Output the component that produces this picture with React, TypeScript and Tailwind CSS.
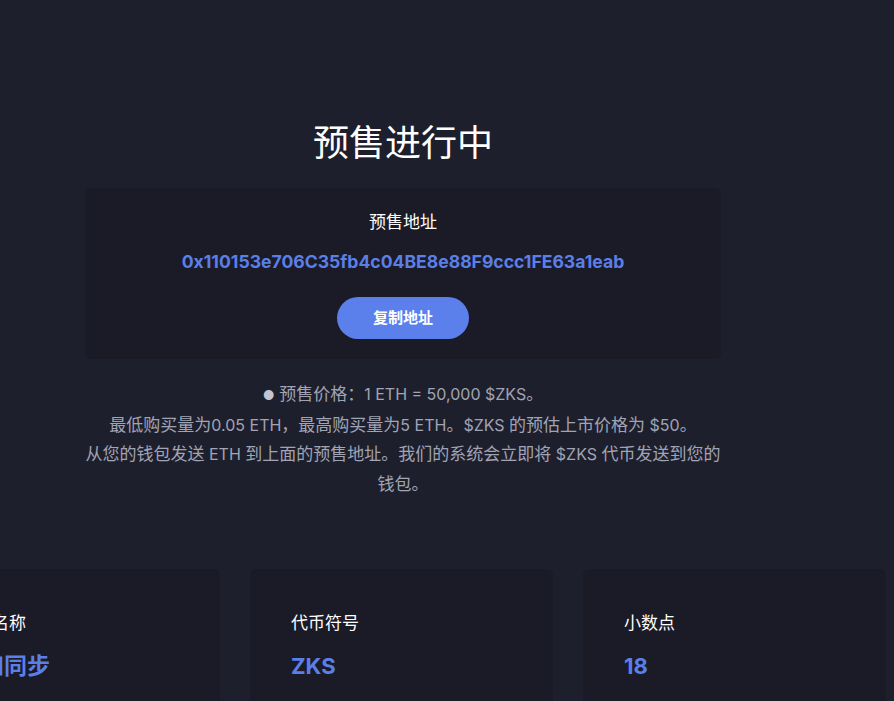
import React from "react";

const font = { fontFamily: 'Inter, "Noto Sans CJK SC", sans-serif' };

// latin runs sit a bit smaller than the CJK glyphs in the paragraph
const L = ({ children }: { children: React.ReactNode }) => <span className="text-[16px]">{children}</span>;

function InfoCard({ label, value, cjk }: { label: string; value: string; cjk?: boolean }) {
    return (
        <div className="w-[303px] h-[180px] shrink-0 rounded-md bg-[#1b1b27] pt-[42px] px-[41px]">
            <div className="text-[17px] leading-6 text-white">{label}</div>
            <div className={cjk ? "mt-[17px] text-[23px] leading-7 font-bold text-[#5b7fe8]" : "mt-[17px] text-[22px] leading-7 font-bold text-[#5b7fe8]"}>{value}</div>
        </div>
    );
}

export default function App() {
    const copy = () => {
        navigator.clipboard?.writeText("0x110153e706C35fb4c04BE8e88F9ccc1FE63a1eab").catch(() => {});
    };

    return (
        <div className="min-h-screen h-[701px] overflow-hidden bg-[#1e1f2d]" style={font}>
            <div className="w-[806px] flex flex-col items-center pt-[120px]">
                <h1 className="text-[36px] leading-[46px] text-white">预售进行中</h1>
                <div className="mt-[22px] w-[636px] h-[171px] rounded-md bg-[#1b1b27] flex flex-col items-center pt-[22px]">
                    <div className="text-[17px] leading-6 text-white">预售地址</div>
                    <div className="mt-[16px] text-[17.6px] leading-6 font-bold text-[#5b7fe8]">0x110153e706C35fb4c04BE8e88F9ccc1FE63a1eab</div>
                    <button onClick={copy} className="mt-[23px] w-[132px] h-[42px] rounded-full bg-[#5b80ec] text-white text-[15px] font-bold">复制地址</button>
                </div>
                <div className="mt-[21px] w-[636px] text-center text-[17px] leading-[29.5px] text-[#a0a4b4]">
                    <p><span className="text-[#c3c5cf] text-[13px]">●</span><L> </L>预售价格：<L>1 ETH = 50,000 $ZKS</L>。</p>
                    <p>最低购买量为<L>0.05 ETH</L>，最高购买量为<L>5 ETH</L>。<L>$ZKS </L>的预估上市价格为<L> $50</L>。</p>
                    <p>从您的钱包发送<L> ETH </L>到上面的预售地址。我们的系统会立即将<L> $ZKS </L>代币发送到您的钱包。</p>
                </div>
                <div className="mt-[70px] w-full flex justify-center gap-[30px] pr-[3px]">
                    <InfoCard label="代币名称" value="零知同步" cjk />
                    <InfoCard label="代币符号" value="ZKS" />
                    <InfoCard label="小数点" value="18" />
                </div>
            </div>
        </div>
    );
}
